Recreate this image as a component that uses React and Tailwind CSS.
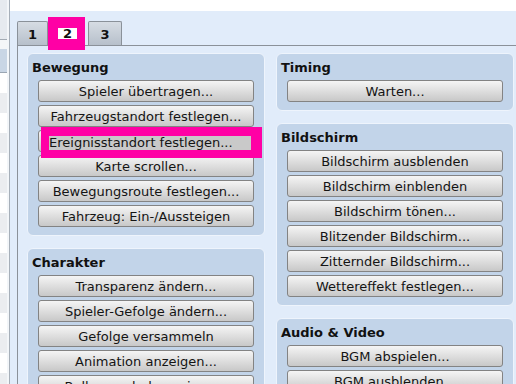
const groupsLeft = [
  {
    title: "Bewegung",
    items: [
      "Spieler übertragen...",
      "Fahrzeugstandort festlegen...",
      "Ereignisstandort festlegen...",
      "Karte scrollen...",
      "Bewegungsroute festlegen...",
      "Fahrzeug: Ein-/Aussteigen",
    ],
  },
  {
    title: "Charakter",
    items: [
      "Transparenz ändern...",
      "Spieler-Gefolge ändern...",
      "Gefolge versammeln",
      "Animation anzeigen...",
      "Ballonsymbol anzeigen...",
      "Ereignis löschen",
    ],
  },
];

const groupsRight = [
  { title: "Timing", items: ["Warten..."] },
  {
    title: "Bildschirm",
    items: [
      "Bildschirm ausblenden",
      "Bildschirm einblenden",
      "Bildschirm tönen...",
      "Blitzender Bildschirm...",
      "Zitternder Bildschirm...",
      "Wettereffekt festlegen...",
    ],
  },
  {
    title: "Audio & Video",
    items: ["BGM abspielen...", "BGM ausblenden...", "BGM speichern", "BGM fortsetzen"],
  },
];

const stripeRows = Array.from({ length: 16 }, (_, i) => i);

const buttonClass =
  "h-[22px] w-full rounded-[3px] border border-[#838383] bg-gradient-to-b from-[#f5f5f5] to-[#c8c8c8] pt-px text-center text-[13px] leading-[19px] text-[#141414] whitespace-nowrap";

const CommandButton = ({ label, marked }) => {
  if (!marked) {
    return <div className={buttonClass}>{label}</div>;
  }

  // highlighted entry: the marker box sits over the button, label shown on its selection bg
  return (
    <div className="relative">
      <div className={buttonClass} />
      <div className="absolute left-[3px] top-[-3px] h-[31px] w-[221px] bg-[#ff00a5]">
        <div className="absolute left-[8px] top-[9px] h-[14px] w-[202px] bg-[#c9c9c9] text-[13px] leading-[14px] text-[#141414] whitespace-nowrap">
          {label}
        </div>
      </div>
    </div>
  );
};

const Group = ({ group }) => (
  <div className="rounded-[6px] border border-[#eef4fc] bg-[#c2d4e9] px-[4px] pt-[5px] pb-[8px]">
    <p className="mb-[4px] text-[13px] font-bold leading-[17px] text-[#111]">{group.title}</p>
    <div className="flex flex-col gap-[3px] px-[6px]">
      {group.items.map((item) => (
        <CommandButton key={item} label={item} marked={item === "Ereignisstandort festlegen..."} />
      ))}
    </div>
  </div>
);

const App = () => {
  return (
    <div className="flex h-[384px] w-[516px] overflow-hidden bg-[#e1ecfa] font-['DejaVu_Sans',sans-serif]">
      {/* background window peeking out on the left */}
      <div className="flex w-[7px] shrink-0 flex-col bg-white">
        <div className="h-[40px] shrink-0 bg-[#e6eaef] border-b border-[#a3abb4]" />
        <div className="h-[9px] shrink-0 bg-[#f4f6f8]" />
        <div className="h-[24px] shrink-0 bg-[#c9d6e5] border-b border-[#9aa6b3]" />
        {stripeRows.map((row) => (
          <div key={row} className={row % 2 === 0 ? "h-[20px] shrink-0 bg-white" : "h-[20px] shrink-0 bg-[#ebedf0]"} />
        ))}
      </div>
      <div className="w-[2px] shrink-0 bg-[#f3f6f9]" />
      <div className="w-px shrink-0 bg-[#a6afb9]" />

      {/* dialog */}
      <div className="flex min-w-0 flex-1 flex-col">
        <div className="h-[11px] shrink-0 bg-white" />
        <div className="flex flex-1 flex-col bg-[#e1ecfa] pl-[7px] pt-[10px]">
          <div className="flex h-[24px] shrink-0 items-stretch">
            <div className="w-[31px] rounded-t-[2px] border border-b-0 border-[#8a9199] bg-gradient-to-b from-[#d6dce3] to-[#b7c0cb] pt-[5px] text-center text-[13px] font-bold leading-[15px] text-[#111]">
              1
            </div>
            <div className="relative w-[37px] bg-[#e1ecfa]">
              <div className="absolute left-0 top-[-4px] h-[33px] w-[37px] bg-[#ff00a5]">
                <div className="absolute left-[10px] top-[11px] h-[11px] w-[19px] bg-white text-center text-[13px] font-bold leading-[11px] text-[#111]">
                  2
                </div>
              </div>
            </div>
            <div className="ml-[3px] w-[34px] rounded-t-[2px] border border-b-0 border-[#8a9199] bg-gradient-to-b from-[#d6dce3] to-[#b7c0cb] pt-[5px] text-center text-[13px] font-bold leading-[15px] text-[#111]">
              3
            </div>
          </div>

          <div className="flex flex-1 gap-[11px] border-l border-t border-[#8b9199] pl-[9px] pt-[7px]">
            <div className="flex w-[238px] shrink-0 flex-col gap-[12px]">
              {groupsLeft.map((group) => (
                <Group key={group.title} group={group} />
              ))}
            </div>
            <div className="flex w-[238px] shrink-0 flex-col gap-[12px]">
              {groupsRight.map((group) => (
                <Group key={group.title} group={group} />
              ))}
            </div>
          </div>
        </div>
      </div>
    </div>
  );
};

export default App;
